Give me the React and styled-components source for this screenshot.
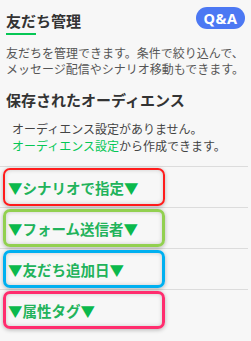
import React from "react";
import styled, { createGlobalStyle } from "styled-components";

const Global = createGlobalStyle`
  html, body { margin: 0; padding: 0; background: #f7f7f7; }
  body { font-family: "Noto Sans CJK JP", "Noto Sans", sans-serif; color: #333; }
`;

const Page = styled.div`
  width: 251px;
  height: 341px;
  overflow: hidden;
  background: #f7f7f7;
`;

const Header = styled.div`
  display: flex;
  justify-content: space-between;
  align-items: flex-start;
  padding: 0 6px;
`;

const TitleBlock = styled.div`
  padding-top: 10px;
`;

const Title = styled.h1`
  margin: 0;
  font-size: 15px;
  line-height: 22px;
  font-weight: 700;
  color: #333;
`;

const Underline = styled.div`
  width: 30px;
  height: 2px;
  margin-top: 1px;
  background: #06c755;
`;

const QaButton = styled.button`
  margin-top: 7px;
  width: 49px;
  height: 22px;
  border: none;
  border-radius: 11px;
  background: #4c78f3;
  color: #fff;
  font-family: "Noto Sans", sans-serif;
  font-weight: 700;
  font-size: 14.5px;
  line-height: 22px;
  padding: 0;
  letter-spacing: 0.5px;
`;

const Description = styled.p`
  margin: 10px 0 0;
  padding: 0 6px;
  font-size: 12px;
  line-height: 16px;
  color: #555;
`;

const SectionTitle = styled.h2`
  margin: 13px 0 0;
  padding: 0 6px;
  font-size: 15px;
  line-height: 20px;
  font-weight: 700;
  color: #333;
`;

const EmptyText = styled.p`
  margin: 10px 0 0;
  padding: 0 12px;
  font-size: 12px;
  line-height: 17px;
  color: #444;
`;

const Link = styled.span`
  color: #06c755;
`;

const List = styled.div`
  margin-top: 12px;
  margin-right: 3px;
`;

const Row = styled.div`
  height: 40px;
  border-top: 1px solid #dcdcdc;
  display: flex;
  align-items: center;
`;

const Annotated = styled.div`
  box-sizing: border-box;
  margin-left: 3px;
  width: 162px;
  height: 38px;
  border: ${(p) => p.$w}px solid ${(p) => p.$color};
  border-radius: 7px;
  box-shadow: 0 1px 4px rgba(0, 0, 0, 0.28), inset 0 0 4px rgba(0, 0, 0, 0.18);
  display: flex;
  align-items: center;
  padding-left: ${(p) => 5 - p.$w}px;
  font-size: 14.5px;
  font-weight: 700;
  color: #22b35b;
  white-space: nowrap;
`;

const Tri = styled.span`
  color: #0bb94c;
`;

const items = [
  { label: "シナリオで指定", color: "#ff1c1c", w: 2 },
  { label: "フォーム送信者", color: "#92d050", w: 3 },
  { label: "友だち追加日", color: "#00b0f0", w: 3 },
  { label: "属性タグ", color: "#ff2d6e", w: 3 },
];

export default function App() {
  return (
    <Page>
      <Global />
      <Header>
        <TitleBlock>
          <Title>友だち管理</Title>
          <Underline />
        </TitleBlock>
        <QaButton>Q&amp;A</QaButton>
      </Header>
      <Description>
        友だちを管理できます。条件で絞り込んで、メッセージ配信やシナリオ移動もできます。
      </Description>
      <SectionTitle>保存されたオーディエンス</SectionTitle>
      <EmptyText>
        オーディエンス設定がありません。
        <br />
        <Link>オーディエンス設定</Link>から作成できます。
      </EmptyText>
      <List>
        {items.map((it) => (
          <Row key={it.label}>
            <Annotated $color={it.color} $w={it.w}>
              <Tri>▼</Tri>
              {it.label}
              <Tri>▼</Tri>
            </Annotated>
          </Row>
        ))}
      </List>
    </Page>
  );
}
